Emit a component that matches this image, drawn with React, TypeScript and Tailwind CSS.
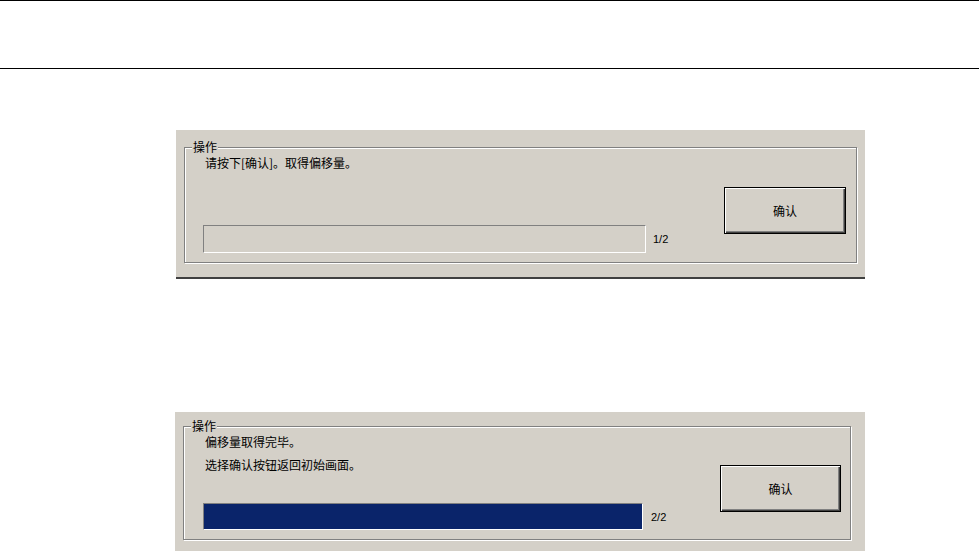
const cjk = "font-['SimSun','Noto_Sans_CJK_SC',sans-serif]";

type PanelProps = {
  lines: string[];
  progress: number;
  label: string;
  outer: string;
  group: string;
  textGap: string;
  barGap: string;
  barW: string;
  barH: string;
  labelGap: string;
  btn: string;
};

function OperationPanel(p: PanelProps) {
  return (
    <div className={`bg-[#d4d0c8] ${p.outer}`}>
      <div
        className={`relative border border-[#808080] shadow-[inset_1px_1px_0_#fff,1px_1px_0_#fff] ${p.group}`}
      >
        <span
          className={`absolute -top-[9px] left-[7px] bg-[#d4d0c8] px-[1px] text-[12px] leading-[16px] text-black ${cjk}`}
        >
          操作
        </span>
        <div className="flex items-end">
          <div className="flex flex-col">
            {p.lines.map((t, i) => (
              <p
                key={i}
                className={`ml-[2px] text-[12px] leading-[16px] text-black ${cjk} ${i > 0 ? p.textGap : ""}`}
              >
                {t}
              </p>
            ))}
            <div className={`flex items-center ${p.barGap}`}>
              <div
                className={`border border-t-[#808080] border-l-[#808080] border-b-white border-r-white bg-[#d4d0c8] ${p.barW} ${p.barH}`}
              >
                <div
                  className="h-full bg-[#0a246a]"
                  style={{ width: `${p.progress * 100}%` }}
                />
              </div>
              <span
                className={`text-[11px] leading-[14px] text-black font-['Liberation_Sans',Arial,sans-serif] ${p.labelGap}`}
              >
                {p.label}
              </span>
            </div>
          </div>
          <button
            className={`ml-auto flex h-[47px] items-center justify-center border border-black bg-[#d4d0c8] text-[12px] text-black shadow-[inset_1px_1px_0_#fff,inset_-1px_-1px_0_#404040,inset_-2px_-2px_0_#808080] ${cjk} ${p.btn}`}
          >
            确认
          </button>
        </div>
      </div>
    </div>
  );
}

export default function App() {
  return (
    <div className="min-h-[552px] w-[979px] overflow-hidden bg-white">
      <div className="h-[69px] border-y border-black" />

      <OperationPanel
        lines={["请按下[确认]。取得偏移量。"]}
        progress={0}
        label="1/2"
        outer="ml-[176px] mt-[61px] w-[689px] border-b-2 border-[#404040] px-[8px] pt-[17px] pb-[14px]"
        group="pl-[18px] pr-[10px] pt-[7px] pb-[9px]"
        textGap=""
        barGap="mt-[54px]"
        barW="w-[443px]"
        barH="h-[28px]"
        labelGap="ml-[7px]"
        btn="w-[122px] mb-[19px]"
      />

      <OperationPanel
        lines={["偏移量取得完毕。", "选择确认按钮返回初始画面。"]}
        progress={1}
        label="2/2"
        outer="ml-[175px] mt-[133px] w-[690px] pl-[8px] pr-[14px] pt-[14px] pb-[11px]"
        group="pl-[19px] pr-[9px] pt-[7px] pb-[9px]"
        textGap="mt-[7px]"
        barGap="mt-[30px]"
        barW="w-[440px]"
        barH="h-[27px]"
        labelGap="ml-[8px]"
        btn="w-[121px] mb-[18px]"
      />
    </div>
  );
}
